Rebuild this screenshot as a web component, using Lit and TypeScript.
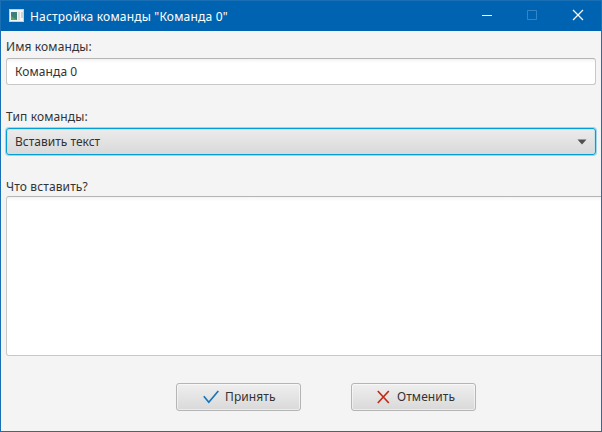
import { LitElement, html, css } from "lit";
import { customElement, property } from "lit/decorators.js";

@customElement("title-bar")
class TitleBar extends LitElement {
  @property() caption = "";
  static styles = css`
    :host { display: flex; height: 30px; background: #0063b1; color: #fff; align-items: center; box-sizing: border-box; }
    .icon { margin: 0 6px 2px 8px; width: 15px; height: 13px; flex: none; }
    .caption { font-size: 12px; line-height: 30px; padding-top: 1px; flex: 1; white-space: pre; letter-spacing: 0.19px; }
    .controls { display: flex; margin-right: 1px; }
    svg { display: block; }
  `;
  render() {
    return html`
      <svg class="icon" viewBox="0 0 15 13">
        <rect width="15" height="13" fill="#d0cdca" />
        <rect x="1" y="1" width="13" height="11" fill="#f5f4f2" />
        <rect x="2" y="3" width="6" height="8" fill="#3c8077" />
        <path d="M2 11V7l6 4z" fill="#55a56b" />
        <path d="M2 3h3l-3 4z" fill="#4179a0" />
        <rect x="9" y="3" width="2" height="8" fill="#dedede" />
        <rect x="12" y="3" width="2" height="6" fill="#cfd3d3" />
      </svg>
      <span class="caption">${this.caption}</span>
      <div class="controls">
        <svg width="45" height="30" viewBox="0 0 45 30"><path d="M17 14.5h10" stroke="#fff" /></svg>
        <svg width="45" height="30" viewBox="0 0 45 30"><path d="M17.5 9.5h9v9h-9z" fill="none" stroke="#3485c5" /></svg>
        <svg width="45" height="30" viewBox="0 0 45 30"><path d="M18 9l10 10M28 9L18 19" stroke="#fff" stroke-width="1.2" /></svg>
      </div>
    `;
  }
}

@customElement("app-root")
class AppRoot extends LitElement {
  static styles = css`
    :host {
      display: flex; flex-direction: column; box-sizing: border-box; width: 602px; height: 432px;
      border: 1px solid #1a6fb5; background: #f4f4f4; overflow: hidden;
      font-family: "Noto Sans", "Open Sans", sans-serif; font-size: 12px; color: #333;
    }
    .form { display: flex; flex-direction: column; padding: 7px 0 0 5px; }
    .label { height: 17px; line-height: 17px; white-space: pre; letter-spacing: 0.12px; }
    .field, .combo {
      box-sizing: border-box; width: 590px; height: 27px; line-height: 25px; padding: 0 8px;
      border-radius: 3px; margin: 3px 0 23px;
    }
    .field { border: 1px solid #c8c8c8; border-top-color: #b5b5b5; background: linear-gradient(#f2f2f2, #fff 4px); letter-spacing: 0.08px; }
    .combo {
      display: flex; align-items: center; justify-content: space-between; border: 1px solid #039ed3;
      background: linear-gradient(#ececec, #d9d9d9); box-shadow: 0 0 0 1px #9bd8ee, inset 0 0 0 1px #c5e2eb;
    }
    .combo svg { display: block; }
    .area {
      box-sizing: border-box; width: 600px; height: 160px; margin-top: 1px; border: 1px solid #c8c8c8;
      border-top-color: #b5b5b5; border-radius: 3px; background: linear-gradient(#f4f4f4, #fff 4px);
    }
    .actions { display: flex; gap: 50px; margin: 27px 0 0 175px; }
    .button {
      box-sizing: border-box; display: flex; align-items: center; width: 125px; height: 28px; padding-left: 26px;
      border: 1px solid #b5b5b5; border-radius: 3px; background: linear-gradient(#efefef, #d9d9d9);
      box-shadow: inset 0 0 0 1px #ffffff80; line-height: 26px; letter-spacing: 0.08px;
    }
    .button.cancel { padding-left: 25px; }
    .button svg { display: block; flex: none; }
    .check { margin-right: 6px; }
    .cross { margin-right: 7px; }
  `;
  render() {
    return html`
      <title-bar caption='Настройка команды "Команда 0"'></title-bar>
      <div class="form">
        <div class="label">Имя команды:</div>
        <div class="field">Команда 0</div>
        <div class="label">Тип команды:</div>
        <div class="combo">
          <span>Вставить текст</span>
          <svg width="10" height="6" viewBox="0 0 10 6"><path d="M.5 .5h9L5 5.5z" fill="#505050" /></svg>
        </div>
        <div class="label">Что вставить?</div>
        <div class="area"></div>
      </div>
      <div class="actions">
        <div class="button">
          <svg class="check" width="16" height="14" viewBox="0 0 16 14"><path d="M.8 6.2l5 6L15.3 1" fill="none" stroke="#1874bb" stroke-width="1.7" /></svg>
          Принять
        </div>
        <div class="button cancel">
          <svg class="cross" width="13" height="14" viewBox="0 0 13 14"><path d="M.8 1l11 12M11.8 1L.8 13" fill="none" stroke="#c32b18" stroke-width="1.7" /></svg>
          Отменить
        </div>
      </div>
    `;
  }
}
